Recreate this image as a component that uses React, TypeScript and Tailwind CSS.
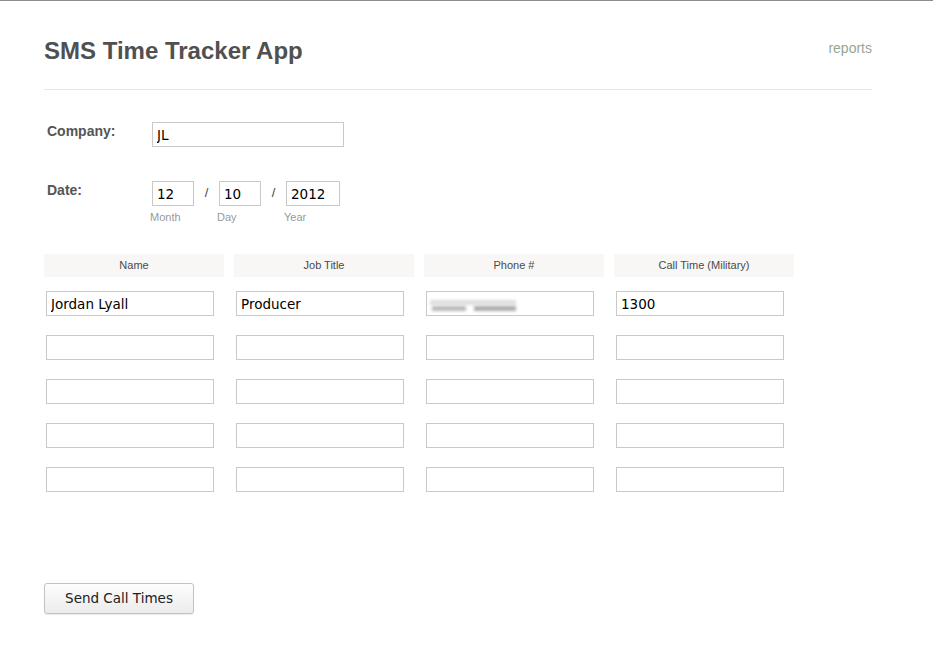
import React from "react";

const columns = ["Name", "Job Title", "Phone #", "Call Time (Military)"];

const rows: string[][] = [
  ["Jordan Lyall", "Producer", "", "1300"],
  ["", "", "", ""],
  ["", "", "", ""],
  ["", "", "", ""],
  ["", "", "", ""],
];

const inputCls =
  "h-[25px] border border-[#c9c9c9] bg-white px-[4px] text-[13.5px] text-black outline-none font-['DejaVu_Sans',sans-serif]";

const BlurredPhone = () => (
  <div className="pointer-events-none absolute left-[6px] top-[8px] h-[14px] w-[86px]">
    <div className="absolute left-0 top-[1px] h-[5px] w-[86px] bg-[#dedede] blur-[1.5px]" />
    <div className="absolute left-[2px] top-[7px] h-[5px] w-[34px] bg-[#b9b9b9] blur-[1.5px]" />
    <div className="absolute left-[44px] top-[7px] h-[5px] w-[42px] bg-[#acacac] blur-[1.5px]" />
  </div>
);

export default function App() {
  return (
    <div className="min-h-[668px] border-t border-[#8c8c8c] bg-white font-['Liberation_Sans',Arial,sans-serif] text-[#555]">
      <div className="ml-[44px] w-[828px]">
        {/* header */}
        <div className="flex items-start justify-between border-b border-[#e6e6e6] pt-[34px] pb-[23px]">
          <h1 className="text-[24px] font-bold leading-[31px] text-[#505050]">
            SMS Time Tracker App
          </h1>
          <a className="mt-[4px] text-[14px] leading-[18px] text-[#98a695]" href="#">
            reports
          </a>
        </div>

        {/* company */}
        <div className="mt-[32px] flex items-start">
          <label className="ml-[3px] w-[105px] pt-[1px] text-[14px] font-bold leading-[16px]">
            Company:
          </label>
          <input className={`${inputCls} w-[192px]`} defaultValue="JL" />
        </div>

        {/* date */}
        <div className="mt-[34px] flex items-start">
          <label className="ml-[3px] w-[105px] pt-[1px] text-[14px] font-bold leading-[16px]">
            Date:
          </label>
          <div className="flex items-start">
            <div className="flex flex-col">
              <input className={`${inputCls} w-[42px]`} defaultValue="12" />
              <span className="ml-[-2px] mt-[5px] text-[11px] leading-[13px] text-[#999]">Month</span>
            </div>
            <span className="w-[25px] pt-[4px] text-center text-[13px] leading-[16px] text-[#444]">/</span>
            <div className="flex flex-col">
              <input className={`${inputCls} w-[42px]`} defaultValue="10" />
              <span className="ml-[-2px] mt-[5px] text-[11px] leading-[13px] text-[#999]">Day</span>
            </div>
            <span className="w-[25px] pt-[4px] text-center text-[13px] leading-[16px] text-[#444]">/</span>
            <div className="flex flex-col">
              <input className={`${inputCls} w-[54px]`} defaultValue="2012" />
              <span className="ml-[-2px] mt-[5px] text-[11px] leading-[13px] text-[#999]">Year</span>
            </div>
          </div>
        </div>

        {/* table */}
        <div className="mt-[30px] grid w-[750px] grid-cols-[180px_180px_180px_180px] gap-x-[10px]">
          {columns.map((c) => (
            <div
              key={c}
              className="flex h-[23px] items-center justify-center bg-[#f8f7f5] text-[11px] text-[#4a4a4a]"
            >
              {c}
            </div>
          ))}
        </div>

        <div className="mt-[14px] flex flex-col gap-y-[19px]">
          {rows.map((r, i) => (
            <div key={i} className="grid w-[750px] grid-cols-[180px_180px_180px_180px] gap-x-[10px]">
              {r.map((v, j) => (
                <div key={j} className="relative pl-[2px]">
                  <input className={`${inputCls} w-[168px]`} defaultValue={v} />
                  {i === 0 && j === 2 && <BlurredPhone />}
                </div>
              ))}
            </div>
          ))}
        </div>

        {/* submit */}
        <button className="mt-[91px] h-[31px] w-[150px] rounded-[3px] border border-[#c2c2c2] bg-gradient-to-b from-[#fdfdfd] to-[#ececec] text-[13.5px] text-[#222] shadow-[0_1px_1px_rgba(0,0,0,0.08)] font-['DejaVu_Sans',sans-serif]">
          Send Call Times
        </button>
      </div>
    </div>
  );
}
